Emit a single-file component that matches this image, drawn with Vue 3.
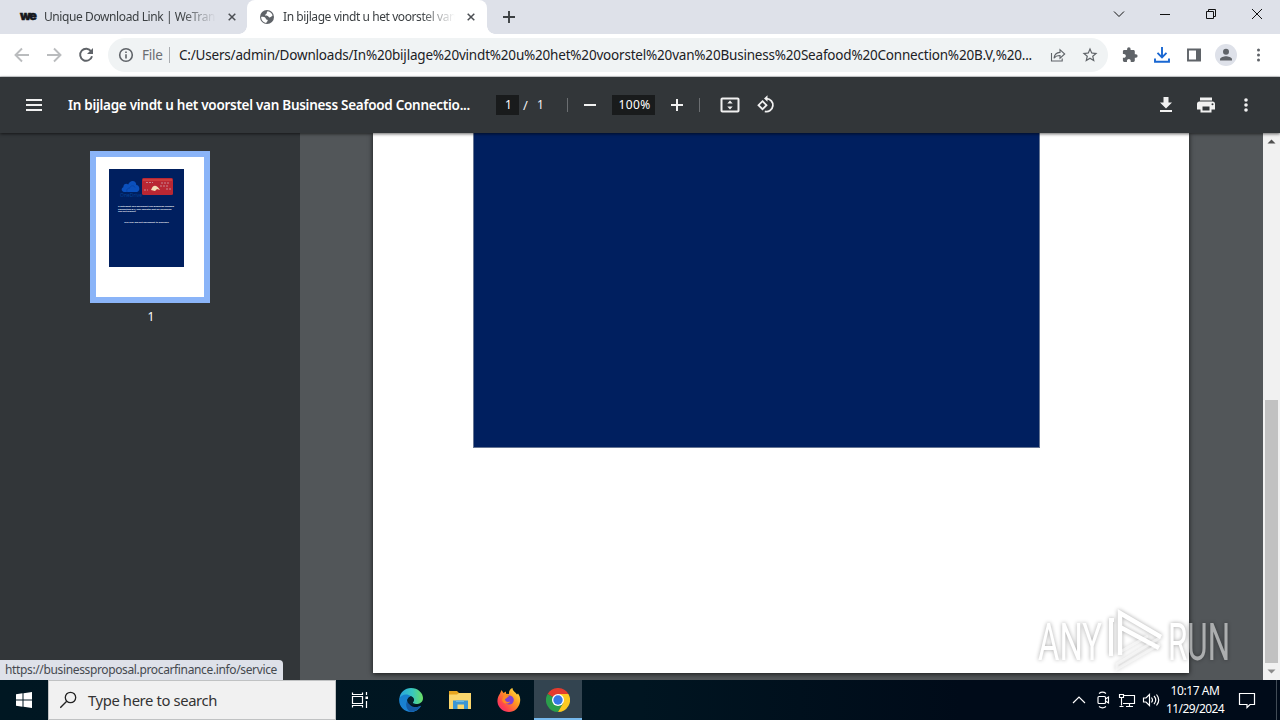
<script setup>
// Spreads or tightens the letters of a label so that it spans the given width.
const vFit = {
  mounted(el, { value }) {
    const natural = el.getBoundingClientRect().width
    el.style.letterSpacing = (value - natural) / el.textContent.length + 'px'
  }
}
const url = 'C:/Users/admin/Downloads/In%20bijlage%20vindt%20u%20het%20voorstel%20van%20Business%20Seafood%20Connection%20B.V,%20...'
</script>

<template>
  <div class="screen">
    <header class="tabs">
      <div class="tab first">
        <span class="we">we</span>
        <span class="tab-title fade"><span v-fit="171" class="label">Unique Download Link | WeTran</span></span>
        <svg class="close" viewBox="0 0 8 8"><path d="M.7.7l6.600 6.600M7.300.7L.7 7.300" /></svg>
      </div>
      <div class="tab active">
        <svg class="globe" viewBox="0 0 16 16"><circle cx="8" cy="8" r="7" fill="#5f6368" /><path d="M8.800 2.200c2.300.3 4.300 2 4.800 4.400-1.100.8-1.500 1.700-2.800 1.800-1.200.1-1-.9-1.900-1.400-1-.5-2.300.1-2.600-.8-.2-.8.9-1.100 1.300-1.800.3-.6-.1-1.400 1.200-2.200zM2.100 7.900c1.500-.2 3.600.2 4.400 1 .5.500.2 1.200 1 1.600.7.300 1.300.1 1.200 1-.1 1-1.400 1.300-1.400 2.400-3-.3-5.100-3-5.200-6z" fill="#fff" /></svg>
        <span class="tab-title fade"><span v-fit="173" class="label">In bijlage vindt u het voorstel van</span></span>
        <svg class="close" viewBox="0 0 8 8"><path d="M.7.7l6.600 6.600M7.300.7L.7 7.300" /></svg>
      </div>
      <svg class="newtab" viewBox="0 0 12 12"><path d="M6 0v12M0 6h12" /></svg>
      <div class="controls">
        <svg viewBox="0 0 46 28"><path d="M18 11.500l5 5 5-5" /></svg>
        <svg viewBox="0 0 46 28"><path d="M18 14.500h10" /></svg>
        <svg viewBox="0 0 46 28"><path d="M18.500 11.500h7v7h-7zM20.500 11.500v-2h7v7h-2" /></svg>
        <svg viewBox="0 0 46 28"><path d="M18 9l10 10M28 9L18 19" /></svg>
      </div>
    </header>

    <div class="toolbar">
      <div class="nav">
        <svg class="dim" viewBox="0 0 32 32"><path d="M23 16H10M16 9.500L9.500 16l6.500 6.500" /></svg>
        <svg class="dim" viewBox="0 0 32 32"><path d="M9 16h13M16 9.500l6.500 6.500-6.500 6.500" /></svg>
        <svg viewBox="0 0 32 32"><path d="M21.200 12.500A6 6 0 1 0 22 17.200" /><path d="M23 9v6h-6z" class="solid" /></svg>
      </div>
      <div class="omnibox">
        <svg class="info" viewBox="0 0 16 16"><circle cx="8" cy="8" r="6.300" /><path d="M8 7.200v4.300M8 4.400v1.700" /></svg>
        <span v-fit="21" class="label file">File</span>
        <i class="bar"></i>
        <span class="url"><span v-fit="853" class="label">{{ url }}</span></span>
        <svg class="share" viewBox="0 0 16 16"><path d="M1.500 6v8h10.700v-2.500M4 11.200c.4-3.700 2.400-5.600 6-5.800V2.700L14.700 7 10 11.200V8.500c-2.900 0-4.700.8-6 2.700z" /></svg>
        <svg class="star" viewBox="0 0 24 24"><path d="M22 9.240l-7.190-.62L12 2 9.190 8.630 2 9.240l5.460 4.730L5.820 21 12 17.270 18.180 21l-1.630-7.030L22 9.240zM12 15.400l-3.760 2.270 1-4.280-3.320-2.880 4.380-.38L12 6.100l1.710 4.040 4.380.38-3.320 2.880 1 4.280L12 15.400z" /></svg>
      </div>
      <div class="actions">
        <svg viewBox="0 0 32 32"><path class="solid" transform="translate(7.500 7.500) scale(.7)" d="M20.500 11H19V7c0-1.100-.9-2-2-2h-4V3.500a2.500 2.500 0 0 0-5 0V5H4c-1.100 0-1.990.9-1.990 2v3.800H3.500c1.490 0 2.700 1.210 2.700 2.700s-1.210 2.700-2.700 2.700H2V20c0 1.100.9 2 2 2h3.800v-1.500c0-1.490 1.210-2.700 2.700-2.700s2.700 1.210 2.700 2.700V22H17c1.100 0 2-.9 2-2v-4h1.500a2.500 2.500 0 0 0 0-5z" /></svg>
        <svg class="blue" viewBox="0 0 32 32"><path d="M16 8v10M11.500 13.800L16 18.300l4.500-4.500M9 19.500v3.200h14v-3.200" /></svg>
        <svg viewBox="0 0 32 32"><path d="M10 10.500h12v11H10z" /><path d="M18 10h5v12h-5z" class="solid" /></svg>
        <svg viewBox="0 0 32 32"><circle cx="16" cy="16" r="11" fill="#dee1e9" stroke="none" /><circle cx="16" cy="12.800" r="3" class="solid" /><path d="M10 21.500v-1.200c0-2 4-3 6-3s6 1 6 3v1.200z" class="solid" /></svg>
        <svg viewBox="0 0 32 32"><g class="solid"><circle cx="16.500" cy="11" r="1.500" /><circle cx="16.500" cy="16" r="1.500" /><circle cx="16.500" cy="21" r="1.500" /></g></svg>
      </div>
    </div>

    <div class="pdfbar">
      <svg class="burger" viewBox="0 0 16 12"><path d="M0 1h16M0 6h16M0 11h16" /></svg>
      <span class="doc"><b v-fit="402" class="label">In bijlage vindt u het voorstel van Business Seafood Connectio...</b></span>
      <span class="field page">1</span>
      <span class="slash">/</span><span class="total">1</span>
      <i class="rule r1"></i>
      <svg class="minus" viewBox="0 0 12 12"><path d="M0 6h12" /></svg>
      <span class="field percent"><span v-fit="32" class="label">100%</span></span>
      <svg class="plus" viewBox="0 0 12 12"><path d="M0 6h12M6 0v12" /></svg>
      <i class="rule r2"></i>
      <svg class="fit" viewBox="0 0 20 16"><rect x="1.500" y="1.500" width="17" height="13" rx=".8" /><path d="M10 3.500l2.700 3H7.300zM10 12.500l2.700-3H7.300z" class="solid" /></svg>
      <svg class="rotate" viewBox="0 0 20 20"><path d="M6.500 6.200l4 4-4 4-4-4z" /><path d="M10.500 3.600a6.500 6.500 0 1 1-1.700 12.800" /><path d="M11.500.2v6.600L8 3.500z" class="solid" /></svg>
      <div class="doc-actions">
        <svg viewBox="0 0 24 24"><path d="M18 9.500h-3.500V4h-5v5.500H6l6 6zM6 17v2h12v-2z" class="solid" /></svg>
        <svg viewBox="0 0 24 24"><path d="M18 7.500v-3H6v3zM18.500 8.500h-13a2.500 2.500 0 0 0-2.500 2.500v5.500h3.500v3h11v-3H21V11a2.500 2.500 0 0 0-2.500-2.500zM15.500 17.500h-7v-4h7zM18.500 12.300a1 1 0 1 1 0-2 1 1 0 0 1 0 2z" class="solid" fill-rule="evenodd" /></svg>
        <svg viewBox="0 0 24 24"><g class="solid"><circle cx="12" cy="7" r="1.800" /><circle cx="12" cy="12" r="1.800" /><circle cx="12" cy="17" r="1.800" /></g></svg>
      </div>
    </div>

    <main class="viewer">
      <aside>
        <div class="thumb">
          <div class="sheet">
            <div class="logos">
              <svg class="cloud" viewBox="0 0 22 17"><path d="M5 14C1.500 14 .5 10.500 3.300 9.200 3.300 6 6.500 5 8.200 6.600 10 1 16.500 2.200 16.300 7 20 7.400 20.500 13 17 14z" fill="#0b50bd" /><path d="M7 14c-1-3 1-4 2.500-3.700C10.500 7 14 7 15 9.500" fill="none" stroke="#0845a8" /></svg>
              <svg class="red" viewBox="0 0 32 18"><rect width="31" height="17" rx="1.500" fill="#b92733" /><path d="M1 1h29v2H1z" fill="#cc3b3d" /><path d="M9 12c2-5 5-6 9 0l-3-1-2 2z" fill="#f3dfb6" /><path d="M4 4.500h7M19 5h9M18 8h8M2 12h4M24 11h6" stroke="#c98791" stroke-dasharray="2 1" /></svg>
            </div>
            <div class="one">OneDrive</div>
            <p class="tiny">U ontvangt een document van Business Seafood Connection B.V, een voorstel met de gegevens van het project.</p>
            <p class="tiny center">Klik hier om het document te bekijken</p>
          </div>
        </div>
        <span class="number">1</span>
      </aside>
      <section class="canvas">
        <div class="paper"><div class="bluebox"></div></div>
      </section>
      <div class="scroll">
        <svg viewBox="0 0 17 17"><path d="M4.500 10.500h8l-4-4z" fill="#505050" /></svg>
        <div class="handle"></div>
        <svg class="down" viewBox="0 0 17 17"><path d="M4.500 6.500h8l-4 4z" fill="#8b8b8b" /></svg>
      </div>
      <div class="status"><span v-fit="272" class="label">https://businessproposal.procarfinance.info/service</span></div>
      <svg class="watermark" viewBox="0 0 220 80">
        <text x="2" y="54" textLength="64" lengthAdjust="spacingAndGlyphs">ANY</text>
        <g fill="none" stroke="#fff">
          <path d="M75 50V14h3" stroke-width="4" />
          <path d="M84 49V7l41 24M84 21l39 21" stroke-width="4.500" />
          <path d="M125 31L81 58v5l43-25M84 46l28-16" stroke-width="3" stroke-opacity=".5" />
        </g>
        <text x="132" y="54" textLength="62" lengthAdjust="spacingAndGlyphs">RUN</text>
      </svg>
    </main>

    <footer class="taskbar">
      <div class="start"><svg viewBox="0 0 16 16"><path d="M0 2.300L6.500 1.300v6.200H0zM7.500 1.200L16 0v7.500H7.500zM0 8.500h6.500v6.200L0 13.700zM7.500 8.500H16V16l-8.500-1.200z" fill="#fff" /></svg></div>
      <div class="search">
        <svg viewBox="0 0 18 18"><circle cx="10.500" cy="6.500" r="5.200" /><path d="M6.700 10.300L.3 16.700" /></svg>
        <span v-fit="129" class="label">Type here to search</span>
      </div>
      <div class="app view"><svg viewBox="0 0 24 24" fill="none" stroke="#fff"><path d="M4.500 4.500v2h10v-2M4.500 19.500v-2h10v2M4.500 8.500h10v7h-10zM18.500 4v3M18.500 13v7" stroke-width="1.200" /><path d="M17.500 8.500h2.500v2.500h-2.500z" fill="#fff" stroke="none" /></svg></div>
      <div class="app"><svg viewBox="0 0 24 24"><defs><linearGradient id="edge-green" x1="0" x2="1"><stop stop-color="#28a4df" /><stop offset=".55" stop-color="#38c7bf" /><stop offset="1" stop-color="#6bdf63" /></linearGradient><linearGradient id="edge-blue" x1="0" y1="0" x2="0" y2="1"><stop stop-color="#1780cd" /><stop offset="1" stop-color="#1c83d4" /></linearGradient></defs><path d="M.4 11C1 4 6 0 12 0c7 0 12 5 12 10 0 4-3 6-7 6-3 0-4-1-3-2 2-3-1-6-4-6-4 0-8 1-9.600 3z" fill="url(#edge-green)" /><path d="M.2 11C1.600 6.500 8 5 12 8.200c-3 .8-4.500 3.500-3.500 6.500 1.500 4.300 7 6 13.500 3-2 4-6 6.300-10 6.300C5 24-.5 18 .2 11z" fill="url(#edge-blue)" /><path d="M8.600 12.500c-2.500 3-1.800 8 2.400 11.300 4.500.3 8.700-2 11-6-6 3-11.500 1-13.400-5.300z" fill="#145ba5" /><path d="M12 8.200c3 1 4 3.500 2.200 5.800-1 1 0 2.200 3.300 2 -3 1.800-7 1-8.800-1.800-.8-2.500.8-5.300 3.300-6z" fill="#06202d" /></svg></div>
      <div class="app"><svg viewBox="0 0 24 24"><path d="M1 3h8l2 2h11v3H1z" fill="#e6a51f" /><path d="M1 6.500h8l2-1.500h12v16H1z" fill="#fad66c" /><path d="M5 21v-8.500h15V21h-4v-4.500H9.500V21z" fill="#3b96d4" /><path d="M8 12.500h8v1.500H8z" fill="#68b8e7" /></svg></div>
      <div class="app"><svg viewBox="0 0 24 24"><defs><linearGradient id="flame" x1="1" y1="0" x2="0" y2="1"><stop stop-color="#fff44f" /><stop offset=".4" stop-color="#ff9a20" /><stop offset=".75" stop-color="#ff4050" /><stop offset="1" stop-color="#e82886" /></linearGradient></defs><path d="M3 5.500L4.500 2l2 3L9 3.500v2.200l3 .3C11.700 3 13 1 15.500 0c0 3 3 4 4.500 6.500l1-1c2 2.500 2.600 5.500 2 8.500-1 6-5.500 10-11 10S1 20 .5 14C.2 11 1.200 8 3 5.500z" fill="url(#flame)" /><circle cx="12.200" cy="12" r="4.600" fill="#8140d3" /><path d="M7 7c2-1 4 .5 5 1.500-2 .2-2 2-4 2.500 0 3 3 3.500 5 2.500-1 3-7 3-8-1.500z" fill="#ff8a23" /></svg></div>
      <div class="app running"><svg viewBox="0 0 24 24"><path d="M12 12L1.600 6A12 12 0 0 1 22.400 6z" fill="#e33b2e" /><path d="M12 12L1.600 6A12 12 0 0 0 12 24l5.200-9z" fill="#2b9e4b" /><path d="M12 6h10.400A12 12 0 0 1 12 24l5.200-9z" fill="#fcc921" /><circle cx="12" cy="12" r="6" fill="#fff" /><circle cx="12" cy="12" r="4.700" fill="#3478e5" /></svg></div>
      <div class="tray">
        <svg viewBox="0 0 24 24"><path d="M6 15l6-6 6 6" /></svg>
        <svg viewBox="0 0 24 24"><rect x="7" y="8.500" width="7.500" height="7" rx="1" /><path d="M14.500 11l3-2v6l-3-2M8 5.500c2-1.500 5-1.500 7 0M8 18.500c2 1.500 5 1.500 7 0" /></svg>
        <svg viewBox="0 0 24 24"><path d="M9 7.500h10.500v8H8M11 18.500h7M14.500 15.500v3M4.500 6.500h4v3h-4zM6.500 9.500v8M4.500 18.500h4" /></svg>
        <svg viewBox="0 0 24 24"><path d="M4.500 10v4h2.500l3.500 3.500v-11L7 10zM12.500 9.500q2 2.500 0 5M15 8q3.500 4 0 8M17.500 6.500q4.500 5.500 0 11" /></svg>
      </div>
      <div class="clock"><div><span v-fit="49" class="label">10:17 AM</span></div><div><span v-fit="58" class="label">11/29/2024</span></div></div>
      <svg class="notice" viewBox="0 0 18 18"><path d="M1.500 2.500h15v11H12l-3 3v-3H1.500z" /></svg>
      <i class="peek"></i>
    </footer>
  </div>
</template>

<style>
body { margin: 0; overflow: hidden; }
</style>

<style scoped>
* { box-sizing: border-box; }
svg { display: block; flex: none; }
.screen { width: 1280px; height: 720px; display: flex; flex-direction: column; overflow: hidden; font: 12px/16px "Noto Sans", "Open Sans", sans-serif; color: #3c4043; background: #fff; }
.label { display: inline-block; white-space: pre; }
.tabs { height: 34px; flex: none; display: flex; background: #dee1e9; }
.tab { height: 34px; display: flex; align-items: center; }
.first { width: 247px; padding-left: 20px; }
.active { width: 240px; padding-left: 12px; background: #fff; border-radius: 8px 8px 0 0; position: relative; }
.active::before, .active::after { content: ""; position: absolute; bottom: 0; width: 8px; height: 8px; }
.active::before { left: -8px; background: radial-gradient(circle at 0 0, transparent 7.500px, #fff 8px); }
.active::after { right: -8px; background: radial-gradient(circle at 100% 0, transparent 7.500px, #fff 8px); }
.we { width: 24px; font: 900 12.500px/16px Inter, Lato, sans-serif; color: #16181d; letter-spacing: -1.600px; -webkit-text-stroke: .5px #16181d; transform: translateY(-1px); }
.globe { width: 16px; height: 16px; margin-right: 8px; }
.tab-title { width: 172px; overflow: hidden; }
.fade { -webkit-mask-image: linear-gradient(90deg, #000 80%, transparent); mask-image: linear-gradient(90deg, #000 80%, transparent); }
.close { width: 8px; height: 8px; margin-left: 12px; fill: none; stroke: #4b4e53; stroke-width: 1.500; }
.newtab { width: 12px; height: 12px; margin: 11px 0 0 16px; stroke: #3c4043; stroke-width: 1.900; }
.controls { margin-left: auto; display: flex; }
.controls svg { width: 46px; height: 28px; fill: none; stroke: #111; stroke-width: 1; }
.toolbar { height: 43px; flex: none; display: flex; align-items: center; padding: 0 6px; border-bottom: 1px solid #d5d7da; background: #fff; }
.nav, .actions { display: flex; }
.nav svg, .actions svg { width: 32px; height: 32px; fill: none; stroke: #5f6368; stroke-width: 1.900; }
.nav .dim { stroke: #babcbe; }
.nav .solid, .actions .solid { fill: #5f6368; stroke: none; }
.actions .blue { stroke: #1967d2; }
.omnibox { width: 1000px; height: 34px; margin: 0 6px; border-radius: 17px; background: #f0f3f4; display: flex; align-items: center; line-height: 18px; }
.info { width: 16px; height: 16px; margin: 0 8px 0 10px; fill: none; stroke: #5f6368; stroke-width: 1.600; }
.file { width: 22px; color: #6a6d71; font-size: 13.500px; }
.bar { width: 1px; height: 16px; margin: 0 9px 0 5px; background: #a9acb0; }
.url { width: 871px; color: #202124; font-size: 13.500px; }
.share, .star { width: 16px; height: 16px; fill: none; stroke: #5f6368; stroke-width: 1.100; }
.star { width: 18px; height: 18px; margin-left: 15px; fill: #5f6368; stroke: none; }
.pdfbar { height: 56px; flex: none; display: flex; align-items: center; padding: 0 22px 0 26px; background: #323639; color: #f1f1f1; font-size: 13px; position: relative; z-index: 2; box-shadow: 0 1px 3px #0009; }
.pdfbar svg { fill: none; stroke: #f1f1f1; stroke-width: 2; }
.pdfbar .solid { fill: #f1f1f1; stroke: none; }
.burger { width: 16px; height: 12px; margin-right: 26px; }
.doc { width: 428px; font-size: 13.500px; color: #fff; }
.doc b { font-weight: 600; }
.field { height: 20px; line-height: 20px; background: #191b1c; text-align: center; color: #fff; font-size: 12px; }
.page { width: 23px; padding-left: 2px; }
.slash { width: 14px; padding-left: 4px; }
.total { width: 12px; padding-left: 4px; font-size: 12px; }
.rule { width: 1px; height: 14px; background: #6b6e71; }
.r1 { margin: 0 16px 0 22px; }
.minus, .plus { width: 12px; height: 12px; }
.percent { width: 43px; margin: 0 16px; padding-left: 2px; }
.r2 { margin: 0 20px 0 16px; }
.fit { width: 20px; height: 16px; }
.rotate { width: 20px; height: 20px; margin-left: 16px; }
.pdfbar .rotate { stroke-width: 1.800; }
.doc-actions { margin-left: auto; display: flex; gap: 16px; }
.doc-actions svg { width: 24px; height: 24px; }
.viewer { height: 547px; flex: none; display: flex; position: relative; background: #525659; }
aside { width: 300px; background: #323639; display: flex; flex-direction: column; align-items: center; padding-top: 18px; }
.thumb { width: 120px; height: 152px; border: 6px solid #8ab4f8; background: #fff; padding: 12px 0 0 13px; }
.sheet { width: 75px; height: 98px; background: #001f5f; overflow: hidden; }
.logos { display: flex; padding: 9px 0 0 11px; }
.cloud { width: 22px; height: 17px; }
.red { width: 32px; height: 18px; }
.one { margin-top: -3px; padding-left: 11px; height: 5px; font-size: 5px; line-height: 5px; color: #064293; }
.tiny { margin: 7px 9px 0; height: 9px; font-size: 2.350px; line-height: 2.600px; color: #f2f4f8; font-weight: 700; }
.center { text-align: center; margin-top: 7px; }
.number { margin: 6px 0 0 2px; color: #fff; font-size: 12px; }
.canvas { width: 963px; overflow: hidden; }
.paper { width: 816px; height: 540px; margin-left: 73px; padding-left: 100px; background: #fff; box-shadow: 0 1px 5px #000b; }
.bluebox { width: 567px; height: 315px; background: #001f5f; border: solid #667593; border-width: 0 1px 1px; }
.scroll { width: 17px; height: 547px; background: #f1f1f1; display: flex; flex-direction: column; align-items: center; }
.scroll svg { width: 17px; height: 17px; }
.handle { width: 13px; height: 263px; margin-top: 250px; background: #c1c1c1; }
.status { position: absolute; left: 0; bottom: 0; width: 283px; height: 20px; padding-left: 5px; line-height: 20px; background: #dee1e9; border-top-right-radius: 4px; color: #45494f; }
.watermark { position: absolute; left: 1036px; top: 473px; width: 220px; height: 80px; opacity: .52; filter: drop-shadow(0 0 2px #000a); overflow: visible; }
.watermark text { font: 400 52px Roboto, sans-serif; fill: #fff; }
.taskbar { height: 40px; flex: none; display: flex; position: relative; background: linear-gradient(90deg, #001722, #001521 50%, #000b19 75%, #000b19); color: #fff; }
.start { width: 48px; display: grid; place-items: center; }
.start svg { width: 16px; height: 16px; }
.search { width: 288px; display: flex; align-items: center; padding-left: 11px; background: #f1f1f1; border: 1px solid #c0c2c3; color: #333; font-size: 14.800px; line-height: 20px; }
.search svg { width: 18px; height: 18px; margin-right: 10px; fill: none; stroke: #222; stroke-width: 1.300; }
.app { width: 48px; height: 40px; margin-right: 1px; display: grid; place-items: center; }
.view { margin-right: 3px; }
.app svg { width: 24px; height: 24px; }
.running { margin-right: 0; background: #334450; border-bottom: 2px solid #76b9ed; }
.running svg { transform: translateY(1px); }
.tray { margin-left: auto; display: flex; align-items: center; }
.tray svg { width: 24px; height: 24px; fill: none; stroke: #fff; stroke-width: 1.150; }
.clock { width: 64px; text-align: center; padding-top: 2px; line-height: 18px; }
.notice { width: 18px; height: 18px; margin: 11px 20px 0 11px; fill: none; stroke: #fff; stroke-width: 1.200; }
.peek { width: 1px; margin-right: 3px; background: #414c56; }
</style>
